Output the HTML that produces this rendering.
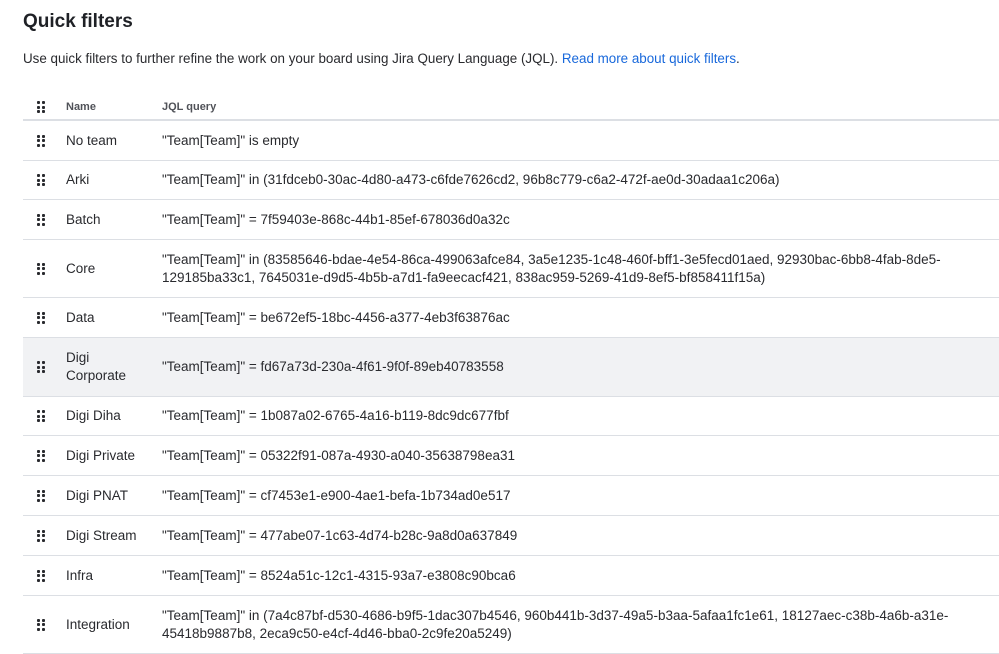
<!DOCTYPE html>
<html><head><meta charset="utf-8"><style>
*{margin:0;padding:0;box-sizing:border-box}
body{width:999px;height:652px;overflow:hidden;background:#fff;font-family:"Liberation Sans",Arial,sans-serif;color:#292a2e}
h1{position:absolute;left:23px;top:11px;font-size:19px;font-weight:bold;color:#1f2126}
.desc{position:absolute;left:23px;top:51px;font-size:13.4px;color:#292a2e}
.desc a{color:#1868db;text-decoration:none}
.tbl{position:absolute;left:23px;top:95px;width:976px}
.row{position:relative;border-bottom:1px solid #dcdfe4;font-size:13.5px;line-height:18px}
.row.h{height:26px;border-bottom:2px solid #dcdfe4;font-size:11px;font-weight:bold;color:#505258}
.row.sel{background:#f1f2f4}
.g{position:absolute;left:14px;top:50%;margin-top:-6px;width:8px;height:12px}
.g i{position:absolute;width:3px;height:3px;background:#292a2e;border-radius:1px}
.n{position:absolute;left:43px;top:50%;transform:translateY(-50%)}
.q{position:absolute;left:139px;top:50%;transform:translateY(-50%);width:830px}
</style></head><body>
<h1>Quick filters</h1>
<div class="desc">Use quick filters to further refine the work on your board using Jira Query Language (JQL). <a>Read more about quick filters</a>.</div>
<div class="tbl" id="t"></div>
<script>
const rows=[
["h","Name","JQL query",26],
["","No team","\"Team[Team]\" is empty",40],
["","Arki","\"Team[Team]\" in (31fdceb0-30ac-4d80-a473-c6fde7626cd2, 96b8c779-c6a2-472f-ae0d-30adaa1c206a)",39],
["","Batch","\"Team[Team]\" = 7f59403e-868c-44b1-85ef-678036d0a32c",40],
["","Core","\"Team[Team]\" in (83585646-bdae-4e54-86ca-499063afce84, 3a5e1235-1c48-460f-bff1-3e5fecd01aed, 92930bac-6bb8-4fab-8de5-<br>129185ba33c1, 7645031e-d9d5-4b5b-a7d1-fa9eecacf421, 838ac959-5269-41d9-8ef5-bf858411f15a)",58],
["","Data","\"Team[Team]\" = be672ef5-18bc-4456-a377-4eb3f63876ac",40],
["sel","Digi<br>Corporate","\"Team[Team]\" = fd67a73d-230a-4f61-9f0f-89eb40783558",59],
["","Digi Diha","\"Team[Team]\" = 1b087a02-6765-4a16-b119-8dc9dc677fbf",39],
["","Digi Private","\"Team[Team]\" = 05322f91-087a-4930-a040-35638798ea31",40],
["","Digi PNAT","\"Team[Team]\" = cf7453e1-e900-4ae1-befa-1b734ad0e517",40],
["","Digi Stream","\"Team[Team]\" = 477abe07-1c63-4d74-b28c-9a8d0a637849",40],
["","Infra","\"Team[Team]\" = 8524a51c-12c1-4315-93a7-e3808c90bca6",40],
["","Integration","\"Team[Team]\" in (7a4c87bf-d530-4686-b9f5-1dac307b4546, 960b441b-3d37-49a5-b3aa-5afaa1fc1e61, 18127aec-c38b-4a6b-a31e-<br>45418b9887b8, 2eca9c50-e4cf-4d46-bba0-2c9fe20a5249)",58]];
let g='<div class="g">';for(let y=0;y<3;y++)for(let x=0;x<2;x++)g+=`<i style="left:${x*5}px;top:${y*4.5}px"></i>`;g+='</div>';
document.getElementById('t').innerHTML=rows.map(r=>`<div class="row ${r[0]}" style="height:${r[3]}px">${g}<div class="n">${r[1]}</div><div class="q" style="white-space:nowrap">${r[2]}</div></div>`).join('');
</script>
</body></html>
